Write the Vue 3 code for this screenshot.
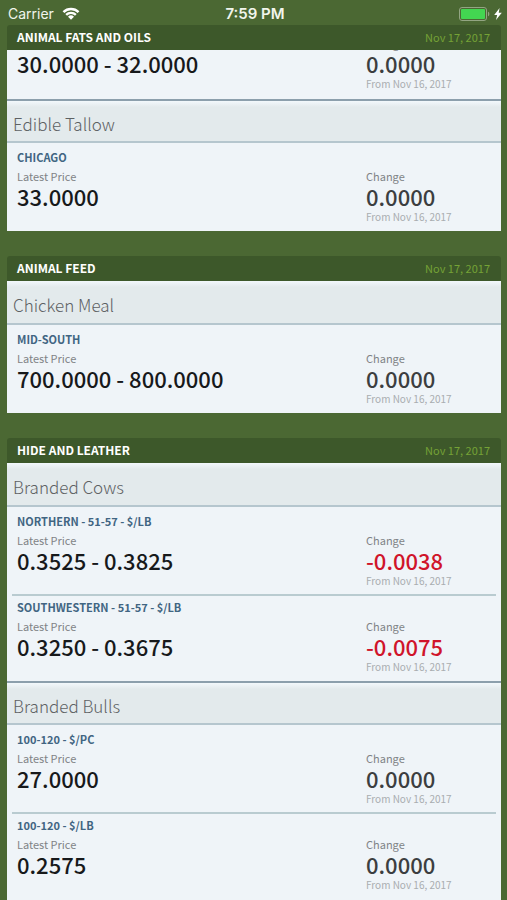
<template>
  <div class="screen">
    <header class="status">
      <div class="carrier">
        <span>Carrier</span>
        <svg class="wifi" viewBox="0 0 18 13" aria-hidden="true">
          <path d="M0.6 4.2a12 12 0 0 1 16.8 0L15.7 6a9.5 9.5 0 0 0-13.4 0z" />
          <path d="M3.3 7a8.1 8.1 0 0 1 11.4 0L13 8.7a5.7 5.7 0 0 0-8 0z" />
          <path d="M6 9.8a4.3 4.3 0 0 1 6 0l-3 3z" />
        </svg>
      </div>
      <time class="clock">7:59 PM</time>
      <div class="power">
        <svg class="battery" viewBox="0 0 32 14" aria-hidden="true">
          <rect class="shell" x="0.5" y="0.5" width="27" height="13" rx="2.5" />
          <rect class="level" x="2" y="2" width="24" height="10" rx="1" />
          <path class="cap" d="M29 4.7c1.8 0.5 1.8 4.1 0 4.6z" />
        </svg>
        <svg class="bolt" viewBox="0 0 8 12" aria-hidden="true">
          <path d="M5.6 0L0.2 7h3L2 12l5.8-7.2H4.7z" />
        </svg>
      </div>
    </header>

    <main class="markets">
      <section v-for="market in markets" :key="market.name" class="market">
        <header class="market-header">
          <h2>{{ market.name }}</h2>
          <time>{{ market.date }}</time>
        </header>

        <div v-for="(group, i) in market.groups" :key="i" class="group">
          <h3 v-if="group.name">{{ group.name }}</h3>
          <div class="quotes" :class="{ scrolled: group.scrolled }">
            <article v-for="quote in group.quotes" :key="quote.label" class="quote">
              <h4 v-if="quote.label">{{ quote.label }}</h4>
              <div class="columns">
                <div>
                  <p class="caption">Latest Price</p>
                  <p class="value">{{ quote.price }}</p>
                </div>
                <div>
                  <p class="caption">Change</p>
                  <p class="value change" :class="{ down: isDown(quote) }">{{ quote.change }}</p>
                  <p class="since">From Nov 16, 2017</p>
                </div>
              </div>
            </article>
          </div>
        </div>
      </section>
    </main>
  </div>
</template>

<script setup>
const date = "Nov 17, 2017";

const markets = [
  {
    name: "ANIMAL FATS AND OILS",
    date,
    groups: [
      {
        scrolled: true,
        quotes: [{ label: "", price: "30.0000 - 32.0000", change: "0.0000" }],
      },
      {
        name: "Edible Tallow",
        quotes: [{ label: "CHICAGO", price: "33.0000", change: "0.0000" }],
      },
    ],
  },
  {
    name: "ANIMAL FEED",
    date,
    groups: [
      {
        name: "Chicken Meal",
        quotes: [{ label: "MID-SOUTH", price: "700.0000 - 800.0000", change: "0.0000" }],
      },
    ],
  },
  {
    name: "HIDE AND LEATHER",
    date,
    groups: [
      {
        name: "Branded Cows",
        quotes: [
          { label: "NORTHERN - 51-57 - $/LB", price: "0.3525 - 0.3825", change: "-0.0038" },
          { label: "SOUTHWESTERN - 51-57 - $/LB", price: "0.3250 - 0.3675", change: "-0.0075" },
        ],
      },
      {
        name: "Branded Bulls",
        quotes: [
          { label: "100-120 - $/PC", price: "27.0000", change: "0.0000" },
          { label: "100-120 - $/LB", price: "0.2575", change: "0.0000" },
        ],
      },
    ],
  },
];

const isDown = (quote) => quote.change.startsWith("-");
</script>

<style>
body {
  margin: 0;
  background: #4b6833;
}
</style>

<style scoped>
.screen {
  display: flex;
  flex-direction: column;
  height: 100vh;
  overflow: hidden;
  background: #4b6833;
  font-family: "Noto Sans CJK SC", "Noto Sans", sans-serif;
}

h2,
h3,
h4,
p {
  margin: 0;
}

.status {
  display: grid;
  grid-template-columns: 1fr auto 1fr;
  align-items: center;
  flex: none;
  height: 25px;
  padding: 2px 5px 0 8px;
  box-sizing: border-box;
  color: #f1f5ec;
  font-family: Inter, sans-serif;
  font-size: 14px;
}

.carrier {
  display: flex;
  align-items: center;
  gap: 8px;
}

.wifi {
  width: 18px;
  height: 13px;
  fill: #fff;
}

.clock {
  font-size: 15px;
  font-weight: 600;
}

.power {
  display: flex;
  align-items: center;
  justify-content: flex-end;
  gap: 3px;

  .battery {
    width: 32px;
    height: 14px;
  }

  .shell {
    fill: none;
    stroke: #93a583;
  }

  .level {
    fill: #43d651;
  }

  .cap {
    fill: #93a583;
  }

  .bolt {
    width: 8px;
    height: 12px;
    fill: #fff;
  }
}

.markets {
  flex: 1;
  min-height: 0;
  padding: 0 6px 0 7px;
  overflow-y: auto;
  scrollbar-width: none;
}

.market + .market {
  margin-top: 25px;
}

.market-header {
  display: flex;
  align-items: flex-start;
  justify-content: space-between;
  height: 25px;
  padding: 0 11px 0 10px;
  border-radius: 3px 3px 0 0;
  background: #3d582a;
  line-height: 24px;

  h2 {
    color: #fff;
    font-size: 12px;
    font-weight: 700;
  }

  time {
    color: #75a236;
    font-size: 11px;
  }
}

.group {
  background: #eff4f8;

  h3 {
    height: 42px;
    padding: 0 6px;
    border-bottom: 2px solid #b5c6ce;
    background: linear-gradient(#f2f8fb, #e3eaec 6px);
    color: #5d6163;
    font-size: 17px;
    font-weight: 300;
    line-height: 48px;
  }
}

.group + .group h3 {
  height: 40px;
  border-top: 2px solid #8c9fac;
  line-height: 46px;
}

.market:last-child .group:last-child {
  padding-bottom: 6px;
}

.quotes {
  padding: 4px 5px 5px;
}

/* only the lower part shows below the section header */
.quotes.scrolled {
  display: flex;
  flex-direction: column;
  justify-content: flex-end;
  height: 43px;
  padding-top: 0;
  padding-bottom: 6px;
  overflow: hidden;
}

.quote {
  padding: 0 5px;
}

.quote + .quote {
  margin-top: 4px;
  padding-top: 1px;
  border-top: 2px solid #b9cbd0;
}

h4 {
  color: #416582;
  font-size: 11px;
  font-weight: 700;
  line-height: 20px;
}

.columns {
  display: grid;
  grid-template-columns: 1fr 125px;
}

.caption {
  color: #7f8386;
  font-size: 11px;
  line-height: 18px;
}

.value {
  color: #17191b;
  font-size: 22px;
  font-weight: 500;
  line-height: 22px;
}

.change {
  color: #3c3e40;
}

.change.down {
  color: #d0142a;
}

.since {
  color: #a9adb0;
  font-size: 10px;
  line-height: 19px;
}
</style>
